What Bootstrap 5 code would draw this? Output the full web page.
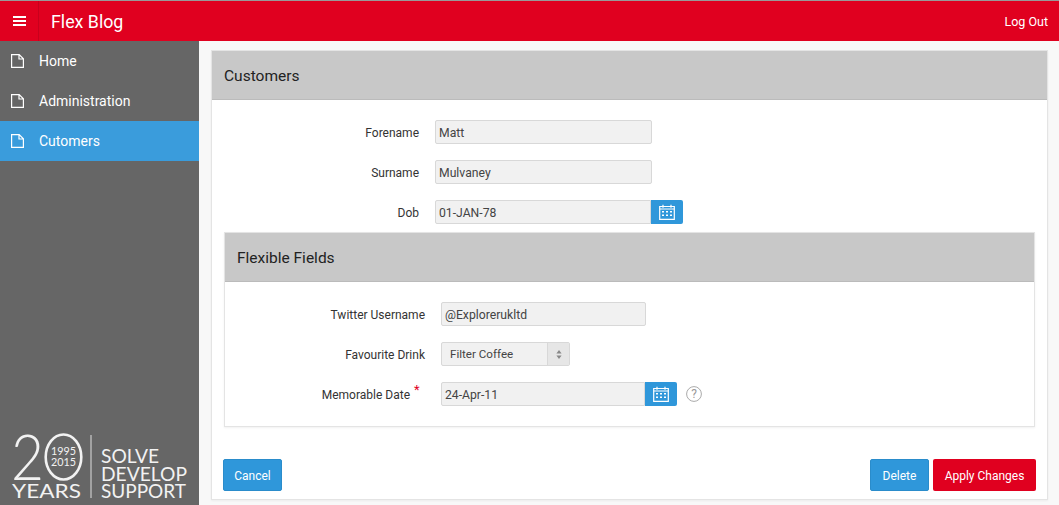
<!DOCTYPE html>
<html lang="en"><head><meta charset="utf-8"><title>Flex Blog</title>
<link href="https://cdn.jsdelivr.net/npm/bootstrap@5.3.0/dist/css/bootstrap.min.css" rel="stylesheet">
<style>
html,body{height:100%;overflow:hidden}
body{font-family:Roboto,"Open Sans",sans-serif;font-size:12px;color:#333;background:#f8f8f8}
.app-shell{height:505px;border-top:1px solid #999}
.topbar{height:40px;background:#e0001f;color:#fff}
.burger{width:39px;height:40px;border-right:1px solid #c8001c;padding:0;background:none;border-top:0;border-left:0;border-bottom:0}
.brand-name{font-size:17.8px;margin-left:12px;color:#fff;padding-top:3px}
.logout-link{color:#fff;font-size:12.5px;text-decoration:none;margin-right:11px;padding-top:2px}
.body-row{height:464px}
.side{width:199px;background:#666;color:#fff}
.side-link{height:40px;color:#fff;text-decoration:none;font-size:14px;padding-left:11px;gap:15px;font-weight:400}
.side-link.is-current{background:#3a9cdc}
.logo-box{margin:0 0 4px 10px}
.main-area{padding:9px 11px 5px 12px;min-width:0}
.outer-panel{height:450px;border:1px solid #e4e4e4;border-radius:2px;box-shadow:0 1px 2px rgba(0,0,0,.05)}
.panel-head{height:49px;background:#c8c8c8;border:0;border-radius:0!important;font-size:15.5px;color:#222;padding:3px 12px 0;display:flex;align-items:center;border-bottom:1px solid #bbb}
.inner-panel{margin:0 12px;height:195px;border:1px solid #e4e4e4;border-radius:2px;box-shadow:0 1px 2px rgba(0,0,0,.06)}
.field-row{height:24px;margin-bottom:16px;display:flex;align-items:center}
.field-label{width:223px;flex:none;text-align:right;padding:2px 16px 0 0;font-size:12px;color:#333;margin:0}
.inner-panel .field-label{width:216px}
.field-box{height:24px;min-height:24px;padding:1px 3px 0;background:#f1f1f1;border:1px solid #d8d8d8;border-radius:2px;font-size:12.2px;color:#444;font-family:inherit}
.w-main{width:217px;flex:none}
.w-sub{width:205px;flex:none}
.w-date{width:216px;flex:none;border-radius:2px 0 0 2px}
.w-datesub{width:204px;flex:none;border-radius:2px 0 0 2px}
.cal-btn{width:32px;height:24px;padding:0;background:#2f97da;border:0;border-radius:0 2px 2px 0;display:flex;align-items:center;justify-content:center}
.drink-select{width:129px;height:24px;padding:1px 0 0 8px;background:#f1f1f1;border:1px solid #d8d8d8;border-radius:2px;font-size:11.6px;color:#444}
.drink-arrows{width:22px;height:22px;background:#e6e6e6;border-left:1px solid #d8d8d8;margin-top:-1px}
.req-star{color:#e0001f;font-size:13px;line-height:0;vertical-align:5px;margin:0 4px;display:inline-block;width:7px;text-align:left}
.act-btn{height:32px;font-size:12px;color:#fff;border:0;border-radius:2px;padding:2px 0 0;display:flex;align-items:center;justify-content:center;white-space:nowrap}
.act-blue{background:#2f97da;border:1px solid #2a8ccb;width:59px}
.act-red{background:#e0001f;width:103px}
.act-blue:hover{background:#2f97da;color:#fff}
.act-red:hover{background:#e0001f;color:#fff}
.foot-row{padding:0 11px;margin-top:32px}
.help-mark{width:16px;height:16px;margin-left:9px}
</style></head>
<body>
<div class="app-shell d-flex flex-column">
  <header class="topbar d-flex align-items-center">
    <button class="burger d-flex align-items-center justify-content-center" aria-label="Menu">
      <svg width="13" height="10" viewBox="0 0 13 10"><path d="M0 0h13v2H0zM0 4h13v2H0zM0 8h13v2H0z" fill="#fff"/></svg>
    </button>
    <span class="brand-name">Flex Blog</span>
    <a href="#" class="logout-link ms-auto">Log Out</a>
  </header>
  <div class="body-row d-flex">
    <aside class="side d-flex flex-column flex-shrink-0">
      <a href="#" class="side-link d-flex align-items-center"><svg width="13" height="14" viewBox="0 0 13 14"><path d="M.6.6h7.6l4.2 4.2v8.6H.6z M8 .6v4.4h4.4" fill="none" stroke="#fff" stroke-width="1.2"/></svg>Home</a>
      <a href="#" class="side-link d-flex align-items-center"><svg width="13" height="14" viewBox="0 0 13 14"><path d="M.6.6h7.6l4.2 4.2v8.6H.6z M8 .6v4.4h4.4" fill="none" stroke="#fff" stroke-width="1.2"/></svg>Administration</a>
      <a href="#" class="side-link is-current d-flex align-items-center"><svg width="13" height="14" viewBox="0 0 13 14"><path d="M.6.6h7.6l4.2 4.2v8.6H.6z M8 .6v4.4h4.4" fill="none" stroke="#fff" stroke-width="1.2"/></svg>Cutomers</a>
      <div class="logo-box mt-auto">
        <svg width="180" height="88" viewBox="0 -20 180 88" font-family="Lato,sans-serif" fill="#f2f2f2">
          <text x="1" y="47" font-size="64" font-weight="300" textLength="33" lengthAdjust="spacingAndGlyphs">2</text>
          <ellipse cx="53.5" cy="24" rx="17.8" ry="22.5" fill="none" stroke="#f2f2f2" stroke-width="2.6"/>
          <text x="53.5" y="22" font-size="10.5" text-anchor="middle" textLength="25" lengthAdjust="spacingAndGlyphs">1995</text>
          <text x="53.5" y="33" font-size="10.5" text-anchor="middle" textLength="25" lengthAdjust="spacingAndGlyphs">2015</text>
          <text x="2" y="65" font-size="19" textLength="69" lengthAdjust="spacingAndGlyphs">YEARS</text>
          <rect x="80.5" y="2" width="1" height="63" fill="#ddd"/>
          <text x="91" y="30" font-size="19" textLength="58" lengthAdjust="spacingAndGlyphs">SOLVE</text>
          <text x="91" y="48" font-size="19" textLength="86" lengthAdjust="spacingAndGlyphs">DEVELOP</text>
          <text x="91" y="65" font-size="19" textLength="85" lengthAdjust="spacingAndGlyphs">SUPPORT</text>
        </svg>
      </div>
    </aside>
    <main class="main-area flex-grow-1">
      <section class="card outer-panel rounded-0">
        <div class="card-header panel-head">Customers</div>
        <div class="pt-3 mt-1">
          <div class="field-row"><label class="field-label">Forename</label><input class="form-control field-box w-main" value="Matt"></div>
          <div class="field-row"><label class="field-label">Surname</label><input class="form-control field-box w-main" value="Mulvaney"></div>
          <div class="field-row mb-2"><label class="field-label">Dob</label><div class="d-flex"><input class="form-control field-box w-date" value="01-JAN-78"><button class="btn cal-btn" aria-label="Pick date"><svg width="16" height="16" viewBox="0 0 16 16"><path d="M.7 2.5h14.6v12.8H.7z" fill="none" stroke="#fff" stroke-width="1.2"/><path d="M4 .8v3M12 .8v3" stroke="#fff" stroke-width="1.2"/><path d="M.7 5h14.6" stroke="#fff"/><path d="M3 7h2v1.6H3zM7 7h2v1.6H7zM11 7h2v1.6h-2zM3 10.4h2V12H3zM7 10.4h2V12H7zM11 10.4h2V12h-2z" fill="#fff"/></svg></button></div></div>
        </div>
        <section class="card inner-panel rounded-0 mt-0">
          <div class="card-header panel-head">Flexible Fields</div>
          <div class="pt-3 mt-1">
            <div class="field-row"><label class="field-label">Twitter Username</label><input class="form-control field-box w-sub" value="@Explorerukltd"></div>
            <div class="field-row"><label class="field-label">Favourite Drink</label>
              <div class="drink-select d-flex align-items-center justify-content-between"><span>Filter Coffee</span><span class="drink-arrows d-flex align-items-center justify-content-center"><svg width="6" height="9" viewBox="0 0 6 9"><path d="M3 0l2.6 3.4H.4zM3 9L.4 5.6h5.2z" fill="#888"/></svg></span></div></div>
            <div class="field-row"><label class="field-label">Memorable Date<span class="req-star">*</span></label><div class="d-flex"><input class="form-control field-box w-datesub" value="24-Apr-11"><button class="btn cal-btn" aria-label="Pick date"><svg width="16" height="16" viewBox="0 0 16 16"><path d="M.7 2.5h14.6v12.8H.7z" fill="none" stroke="#fff" stroke-width="1.2"/><path d="M4 .8v3M12 .8v3" stroke="#fff" stroke-width="1.2"/><path d="M.7 5h14.6" stroke="#fff"/><path d="M3 7h2v1.6H3zM7 7h2v1.6H7zM11 7h2v1.6h-2zM3 10.4h2V12H3zM7 10.4h2V12H7zM11 10.4h2V12h-2z" fill="#fff"/></svg></button></div>
              <svg class="help-mark" viewBox="0 0 16 16"><circle cx="8" cy="8" r="7.4" fill="none" stroke="#aaa"/><text x="8" y="12" font-size="12" text-anchor="middle" fill="#999">?</text></svg></div>
          </div>
        </section>
        <div class="foot-row d-flex align-items-center">
          <button class="btn act-btn act-blue">Cancel</button>
          <button class="btn act-btn act-blue ms-auto me-1">Delete</button>
          <button class="btn act-btn act-red">Apply Changes</button>
        </div>
      </section>
    </main>
  </div>
</div>
<script src="https://cdn.jsdelivr.net/npm/bootstrap@5.3.0/dist/js/bootstrap.bundle.min.js"></script>
</body></html>
